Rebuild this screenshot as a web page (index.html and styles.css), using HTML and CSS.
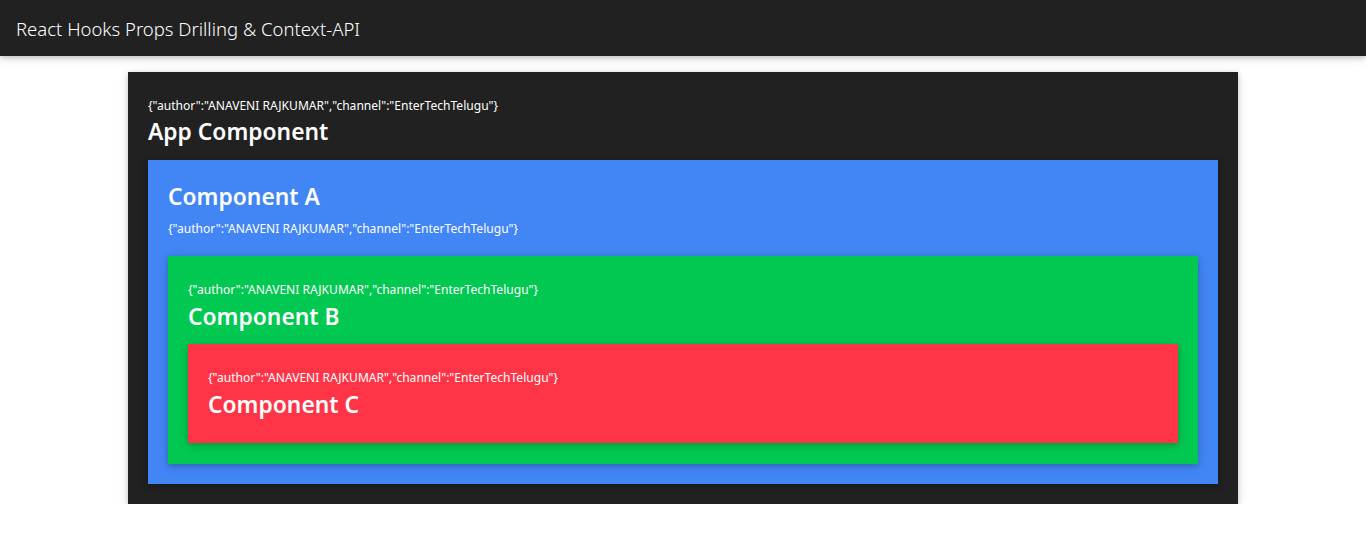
FILE: index.html
```html
<!DOCTYPE html>
<html>
<head>
<meta charset="utf-8">
<title>React Hooks Props Drilling &amp; Context-API</title>
<link rel="stylesheet" href="styles.css">
</head>
<body>
<nav class="navbar">
  <span class="brand">React Hooks Props Drilling &amp; Context-API</span>
</nav>
<main class="container">
  <section class="box box-app">
    <p class="data data-top">{"author":"ANAVENI RAJKUMAR","channel":"EnterTechTelugu"}</p>
    <h3 class="title title-app">App Component</h3>
    <section class="box box-a">
      <h3 class="title title-a">Component A</h3>
      <p class="data data-a">{"author":"ANAVENI RAJKUMAR","channel":"EnterTechTelugu"}</p>
      <section class="box box-b">
        <p class="data data-top">{"author":"ANAVENI RAJKUMAR","channel":"EnterTechTelugu"}</p>
        <h3 class="title title-b">Component B</h3>
        <section class="box box-c">
          <p class="data data-top">{"author":"ANAVENI RAJKUMAR","channel":"EnterTechTelugu"}</p>
          <h3 class="title title-c">Component C</h3>
        </section>
      </section>
    </section>
  </section>
</main>
</body>
</html>
```
FILE: styles.css
```css
* { box-sizing: border-box; }
html, body { margin: 0; padding: 0; }
body {
  background: #ffffff;
  font-family: "Noto Sans", "Open Sans", sans-serif;
  color: #ffffff;
}
.navbar {
  height: 56px;
  background: #212121;
  display: flex;
  align-items: center;
  padding: 0 16px;
  box-shadow: 0 2px 5px 0 rgba(0,0,0,0.16), 0 2px 10px 0 rgba(0,0,0,0.12);
}
.brand {
  font-size: 18.5px;
  font-weight: 300;
  color: #ffffff;
}
.container {
  width: 1110px;
  margin: 16px auto 0;
}
.box {
  padding: 20px;
  box-shadow: 0 2px 5px 0 rgba(0,0,0,0.16), 0 2px 10px 0 rgba(0,0,0,0.12);
}
.box-app { background: #212121; }
.box-a { background: #4285f4; }
.box-b { background: #00c851; padding-bottom: 21px; }
.box-c { background: #ff3547; padding-bottom: 23px; }
.data {
  margin: 0;
  font-size: 12.07px;
  line-height: 20px;
}
.data-top { margin-top: 4px; margin-bottom: -1px; }
.data-a { margin: 7px 0 17px; }
.title {
  margin: 0;
  font-size: 22.8px;
  line-height: 30px;
  font-weight: 600;
}
.title-app { margin: 2px 0 13px; }
.title-a { margin-top: 2px; }
.title-b { margin: 3px 0 12px; }
.title-c { margin-top: 3px; }
```
